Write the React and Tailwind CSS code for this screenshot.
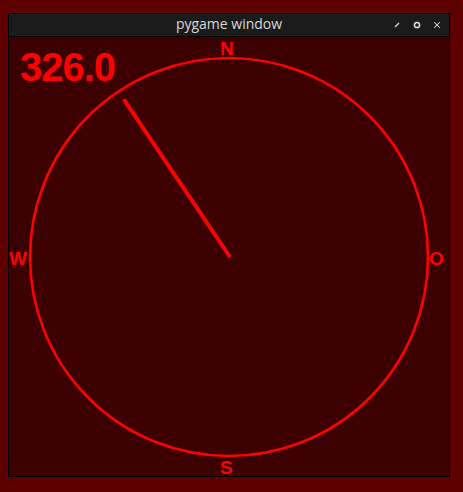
import { X } from 'lucide-react'

const heading = 326.0
const R = 199
const NEEDLE = 190

export default function App() {
  const rad = (heading * Math.PI) / 180
  const nx = 221 + Math.sin(rad) * NEEDLE
  const ny = 220 - Math.cos(rad) * NEEDLE

  return (
    <div className="w-[463px] h-[492px] bg-[#5e0000] pt-[13px] pl-[8px] overflow-hidden" style={{ fontFamily: '"Liberation Sans", Arial, sans-serif' }}>
      <div className="w-[442px] h-[464px] border border-black bg-black flex flex-col">
        {/* title bar */}
        <div className="h-[23px] bg-[#1b1b1b] border-b border-black flex items-center relative">
          <span className="flex-1 text-center text-[14px] text-[#d8d8d8] leading-none pb-[1px]" style={{ fontFamily: '"Open Sans", "Noto Sans", sans-serif' }}>
            pygame window
          </span>
          <div className="absolute right-[7px] top-0 h-full flex items-center gap-[10px] text-[#e0e0e0]">
            <svg width="10" height="10" viewBox="0 0 10 10">
              <path d="M3 7 L7 3" stroke="currentColor" strokeWidth="1.2" />
            </svg>
            <svg width="10" height="10" viewBox="0 0 10 10">
              <circle cx="5" cy="5" r="2.6" fill="none" stroke="currentColor" strokeWidth="1.5" />
            </svg>
            <X size={10} strokeWidth={2.5} />
          </div>
        </div>

        {/* canvas */}
        <div className="relative w-[440px] h-[440px] bg-[#3d0000]">
          <svg className="absolute inset-0" width="440" height="440">
            <circle cx="220" cy="220" r={R} fill="none" stroke="#ff0000" strokeWidth="2.6" />
            <line x1="221" y1="220" x2={nx} y2={ny} stroke="#ff0000" strokeWidth="4" />
          </svg>
          <span className="absolute left-[11px] top-[10px] text-[40px] font-bold text-[#ff0000] leading-none tracking-[-1px]">
            {heading.toFixed(1)}
          </span>
          <span className="absolute left-[211px] top-[2px] text-[19px] font-bold text-[#ff0000] leading-none">N</span>
          <span className="absolute left-[211px] top-[421px] text-[19px] font-bold text-[#ff0000] leading-none">S</span>
          <span className="absolute left-[0px] top-[212px] text-[19px] font-bold text-[#ff0000] leading-none">W</span>
          <span className="absolute left-[420px] top-[212px] text-[19px] font-bold text-[#ff0000] leading-none">O</span>
        </div>
      </div>
    </div>
  )
}
